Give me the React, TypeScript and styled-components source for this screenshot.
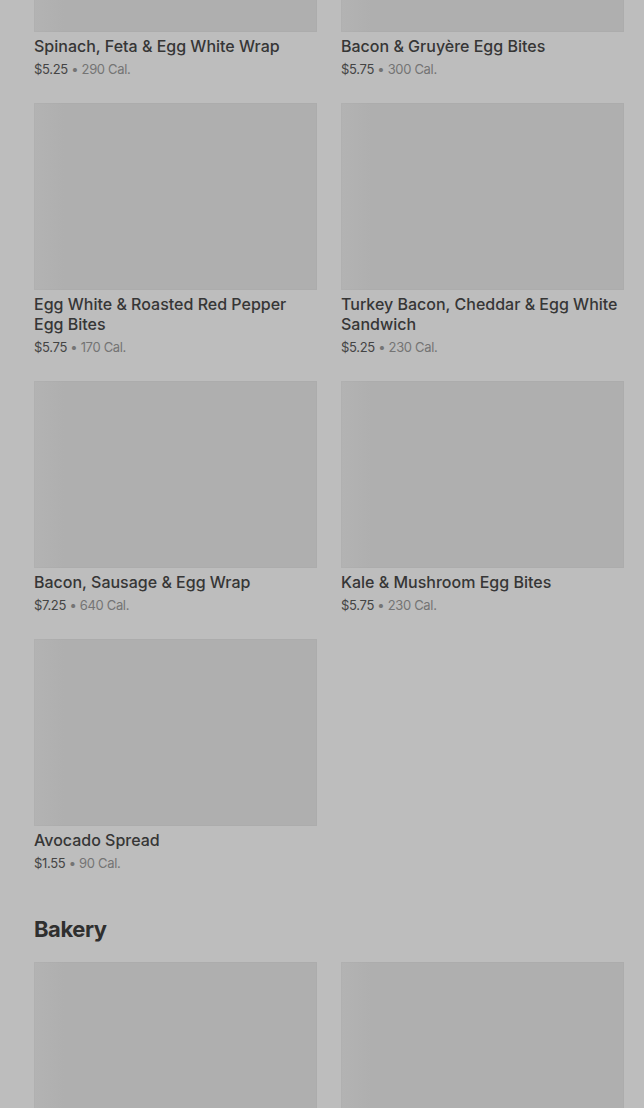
import styled, { createGlobalStyle } from 'styled-components';

const GlobalStyle = createGlobalStyle`
  html, body {
    margin: 0;
    padding: 0;
    background: #bdbdbd;
    font-family: 'Inter', 'Liberation Sans', sans-serif;
  }
`;

export const Viewport = styled.div`
  height: 1108px;
  overflow: hidden;
  background: #bdbdbd;
`;

// the menu is scrolled part way down the first section
export const Scroller = styled.div`
  margin-top: -155px;
  padding: 0 20px 0 34px;
`;

export const Section = styled.section`
  margin-bottom: 41px;
`;

export const SectionTitle = styled.h2`
  margin: 0 0 17px;
  font-family: 'Inter', 'Liberation Sans', sans-serif;
  font-weight: 700;
  font-size: 22px;
  line-height: 32px;
  letter-spacing: -0.02em;
  color: #2f2f2f;
`;

export const Grid = styled.div`
  display: grid;
  grid-template-columns: 283px 283px;
  column-gap: 24px;
  row-gap: 25px;
  align-items: start;
`;

export const Card = styled.div`
  display: flex;
  flex-direction: column;
`;

export const Thumb = styled.div`
  height: 187px;
  margin-bottom: 4px;
  background: linear-gradient(90deg, #b3b3b3 0px, #afafaf 30px, #afafaf 100%);
  box-shadow: inset 0 0 0 1px rgba(0, 0, 0, 0.015);
`;

export const ItemName = styled.div`
  font-weight: 500;
  font-size: 16px;
  line-height: 20px;
  color: #363636;
`;

export const Meta = styled.div`
  margin-top: 4px;
  font-size: 13px;
  line-height: 18px;
  letter-spacing: -0.025em;
  color: #444444;
`;

export const Calories = styled.span`
  color: #747474;
`;

type Item = { name: string; price: string; cal: number };

const breakfast: Item[] = [
  { name: 'Spinach, Feta & Egg White Wrap', price: '$5.25', cal: 290 },
  { name: 'Bacon & Gruyère Egg Bites', price: '$5.75', cal: 300 },
  { name: 'Egg White & Roasted Red Pepper Egg Bites', price: '$5.75', cal: 170 },
  { name: 'Turkey Bacon, Cheddar & Egg White Sandwich', price: '$5.25', cal: 230 },
  { name: 'Bacon, Sausage & Egg Wrap', price: '$7.25', cal: 640 },
  { name: 'Kale & Mushroom Egg Bites', price: '$5.75', cal: 230 },
  { name: 'Avocado Spread', price: '$1.55', cal: 90 },
];

function MenuCard({ item }: { item: Item }) {
  return (
    <Card>
      <Thumb />
      <ItemName>{item.name}</ItemName>
      <Meta>
        {item.price} <Calories>• {item.cal} Cal.</Calories>
      </Meta>
    </Card>
  );
}

export default function App() {
  return (
    <>
      <GlobalStyle />
      <Viewport>
        <Scroller>
          <Section>
            <Grid>
              {breakfast.map((item) => (
                <MenuCard key={item.name} item={item} />
              ))}
            </Grid>
          </Section>
          <Section>
            <SectionTitle>Bakery</SectionTitle>
            {/* only the tops of the bakery photos are in view */}
            <Grid>
              <Card>
                <Thumb />
              </Card>
              <Card>
                <Thumb />
              </Card>
            </Grid>
          </Section>
        </Scroller>
      </Viewport>
    </>
  );
}
